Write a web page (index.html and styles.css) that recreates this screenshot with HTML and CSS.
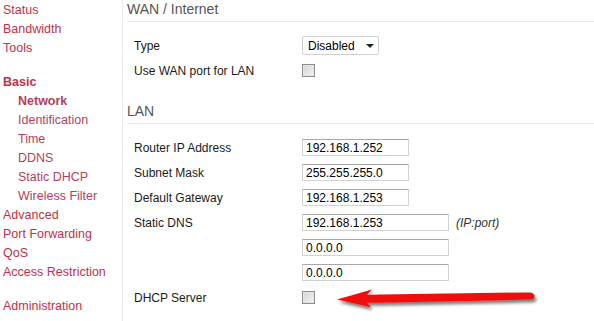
FILE: index.html
```html
<!DOCTYPE html>
<html lang="en">
<head>
    <meta charset="UTF-8">
    <title>Basic Network</title>
    <link rel="stylesheet" href="styles.css">
</head>
<body>
    <div class="page">
        <div class="sidebar">
            <div class="nav-group">
                <a href="#">Status</a>
                <a href="#">Bandwidth</a>
                <a href="#">Tools</a>
            </div>
            <div class="nav-group">
                <a href="#" class="active">Basic</a>
                <a href="#" class="sub active">Network</a>
                <a href="#" class="sub">Identification</a>
                <a href="#" class="sub">Time</a>
                <a href="#" class="sub">DDNS</a>
                <a href="#" class="sub">Static DHCP</a>
                <a href="#" class="sub">Wireless Filter</a>
                <a href="#">Advanced</a>
                <a href="#">Port Forwarding</a>
                <a href="#">QoS</a>
                <a href="#">Access Restriction</a>
            </div>
            <div class="nav-group">
                <a href="#">Administration</a>
            </div>
        </div>

        <div class="content">
            <div class="section">
                <h2>WAN / Internet</h2>
                <div class="fields">
                    <div class="row">
                        <label>Type</label>
                        <span class="select-wrap">
                            <select>
                                <option>Disabled</option>
                            </select>
                        </span>
                    </div>
                    <div class="row">
                        <label>Use WAN port for LAN</label>
                        <input type="checkbox" class="check">
                    </div>
                </div>
            </div>

            <div class="section">
                <h2>LAN</h2>
                <div class="fields">
                    <div class="row">
                        <label>Router IP Address</label>
                        <input type="text" class="ip" value="192.168.1.252">
                    </div>
                    <div class="row">
                        <label>Subnet Mask</label>
                        <input type="text" class="ip" value="255.255.255.0">
                    </div>
                    <div class="row">
                        <label>Default Gateway</label>
                        <input type="text" class="ip" value="192.168.1.253">
                    </div>
                    <div class="row">
                        <label>Static DNS</label>
                        <input type="text" class="ip wide" value="192.168.1.253">
                        <span class="hint">(IP:port)</span>
                    </div>
                    <div class="row">
                        <label></label>
                        <input type="text" class="ip wide" value="0.0.0.0">
                    </div>
                    <div class="row">
                        <label></label>
                        <input type="text" class="ip wide" value="0.0.0.0">
                    </div>
                    <div class="row">
                        <label>DHCP Server</label>
                        <input type="checkbox" class="check">
                    </div>
                </div>
            </div>
        </div>
    </div>

    <!-- annotation arrow pointing at the DHCP Server checkbox -->
    <svg class="arrow" width="594" height="321" viewBox="0 0 594 321">
        <defs>
            <filter id="shadow" x="-10%" y="-50%" width="120%" height="200%">
                <feDropShadow dx="2" dy="3" stdDeviation="1.6" flood-color="#000" flood-opacity="0.5"/>
            </filter>
        </defs>
        <path filter="url(#shadow)" fill="#f20d0d"
              d="M337,299.5 L372,289.5 L367,295 L380,294.4 L530,292.4
                 Q534.5,293 534.5,296 Q534.5,299.2 530,299.6
                 L380,302.8 L367,302.8 L371,307.2 Z"/>
    </svg>
</body>
</html>
```

FILE: styles.css
```css
body {
    margin: 0;
    font-family: "Liberation Sans", Arial, sans-serif;
    font-size: 12px;
    color: #1a1a1a;
    background-color: white;
}
.page {
    display: flex;
    min-height: 321px;
}
.sidebar {
    width: 119px;
    padding: 1px 0 0 3px;
    border-right: 1px solid #ebebeb;
}
.nav-group {
    margin-bottom: 15px;
}
.nav-group a {
    display: block;
    font-size: 12.5px;
    line-height: 19px;
    color: #c62e48;
    text-decoration: none;
    white-space: nowrap;
}
.nav-group a.sub {
    padding-left: 15px;
    color: #b83e5c;
}
.nav-group a.active {
    font-weight: bold;
}
.content {
    flex: 1;
    padding-left: 4px;
}
.section {
    margin-bottom: 19px;
}
h2 {
    margin: 0;
    font-size: 14px;
    font-weight: normal;
    line-height: 18px;
    color: #555;
    padding: 0 0 3px 0;
    border-bottom: 1px solid #e9e9e9;
}
.fields {
    margin-top: 11px;
    padding-left: 7px;
}
.row {
    display: flex;
    align-items: center;
    height: 25px;
}
.row label {
    width: 168px;
    flex-shrink: 0;
}
.ip {
    width: 107px;
    height: 17px;
    box-sizing: border-box;
    padding: 0 3px;
    margin: 0;
    border: 1px solid #d2d2d2;
    border-top-color: #a8a8a8;
    border-radius: 1px;
    font-family: "Liberation Sans", Arial, sans-serif;
    font-size: 12px;
    color: #000;
}
.ip.wide {
    width: 147px;
}
.hint {
    margin-left: 7px;
    font-style: italic;
    color: #333;
}
.select-wrap {
    position: relative;
    display: inline-block;
}
.select-wrap select {
    appearance: none;
    width: 77px;
    height: 19px;
    margin: 0;
    padding: 0 0 0 5px;
    border: 1px solid #d0d0d0;
    border-radius: 2px;
    background-color: white;
    font-family: "Liberation Sans", Arial, sans-serif;
    font-size: 12px;
    color: #000;
}
.select-wrap::after {
    content: "";
    position: absolute;
    right: 5px;
    top: 8px;
    border-left: 4px solid transparent;
    border-right: 4px solid transparent;
    border-top: 4px solid #222;
}
.check {
    appearance: none;
    width: 13px;
    height: 13px;
    margin: 0;
    box-sizing: border-box;
    border: 1px solid #8e8e8e;
    background: linear-gradient(135deg, #d4d4d4, #f4f4f4);
    box-shadow: inset 0 0 0 1px #e6e6e6;
}
.arrow {
    position: absolute;
    left: 0;
    top: 0;
    pointer-events: none;
}
```
